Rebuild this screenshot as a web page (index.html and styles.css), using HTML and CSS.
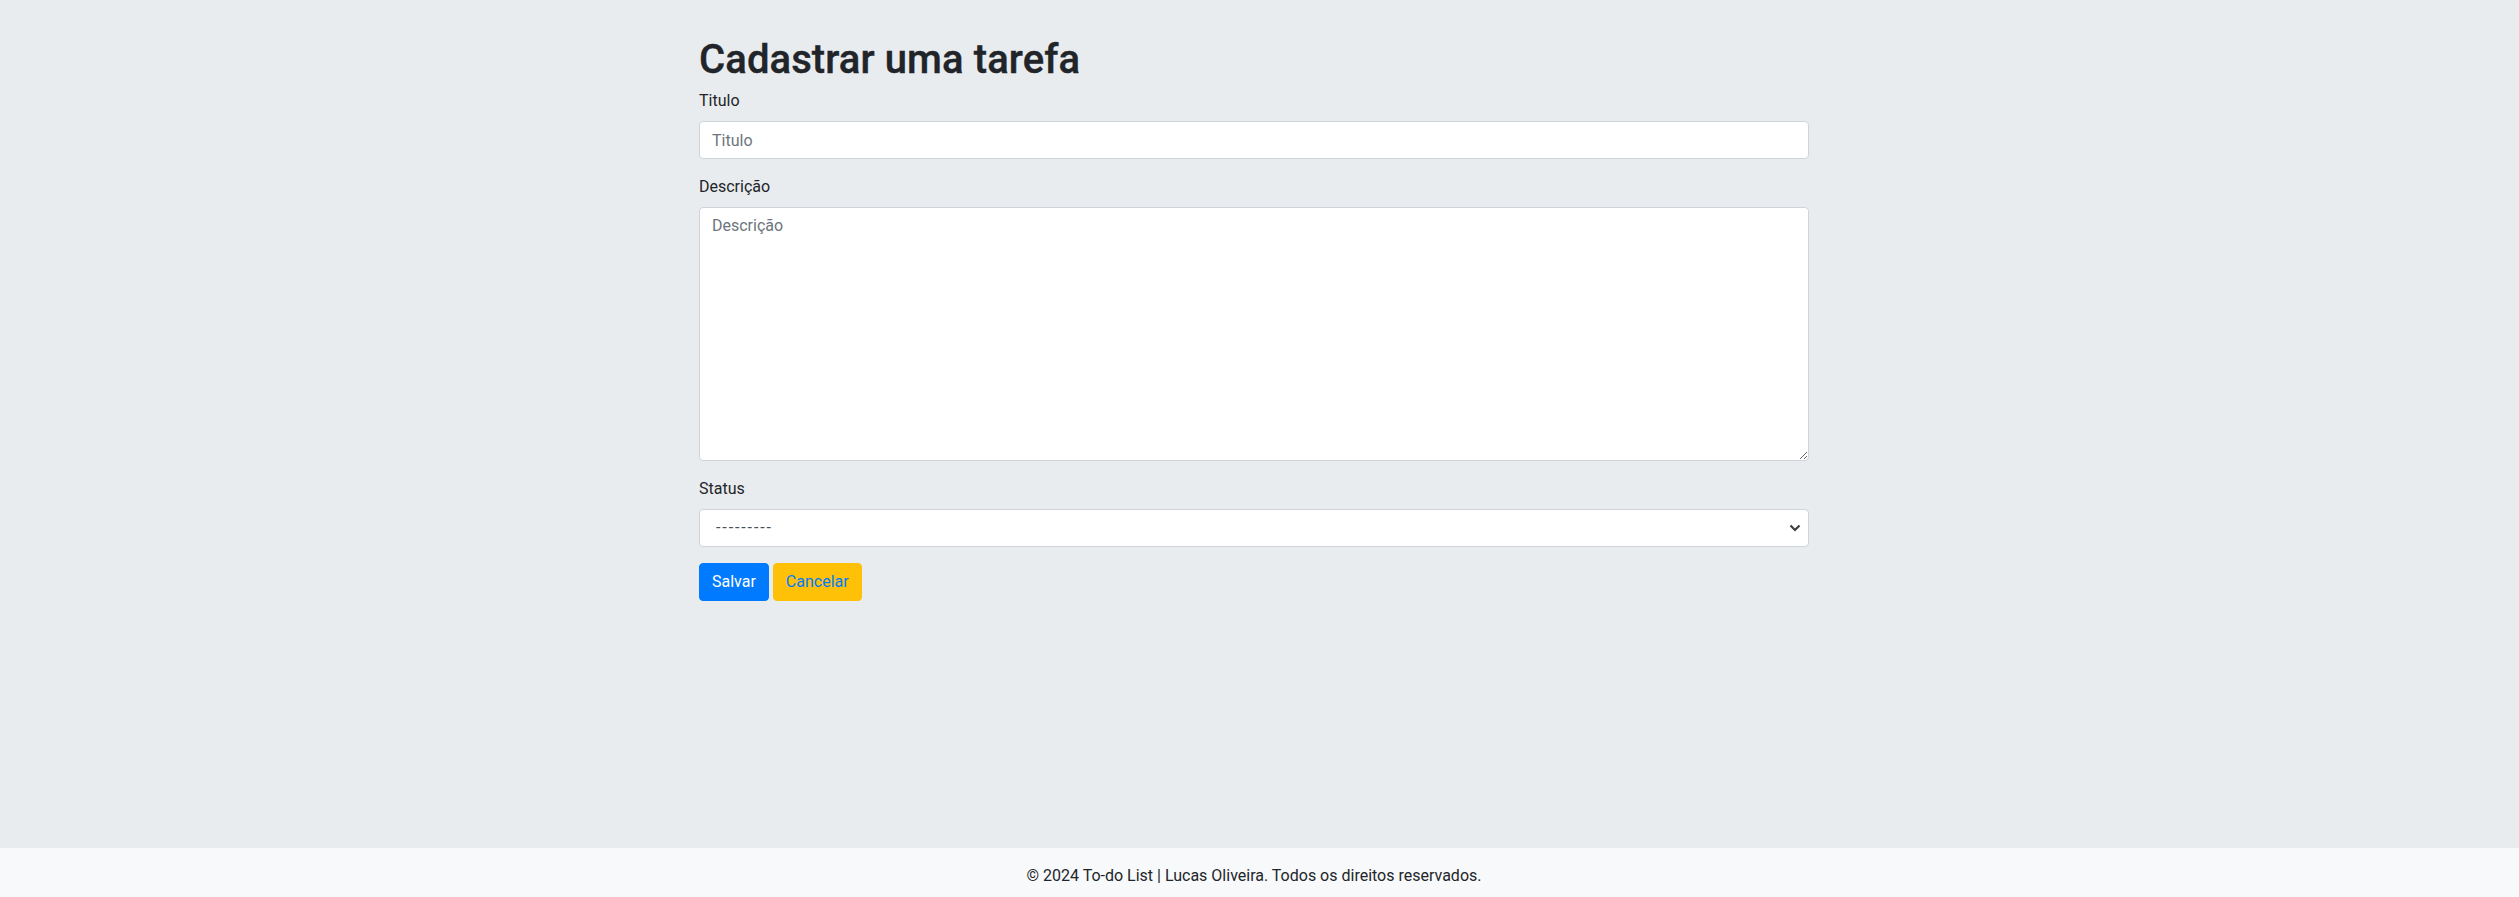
FILE: index.html
```html
<!DOCTYPE html>
<html lang="pt-br">
<head>
<meta charset="utf-8">
<title>Cadastrar uma tarefa</title>
<link rel="stylesheet" href="styles.css">
</head>
<body>
<div class="page">
  <main class="main">
    <div class="container">
      <h1 class="title">Cadastrar uma tarefa</h1>
      <form class="form">
        <div class="form-group">
          <label class="label" for="titulo">Titulo</label>
          <input class="control" id="titulo" type="text" placeholder="Titulo">
        </div>
        <div class="form-group">
          <label class="label" for="descricao">Descrição</label>
          <textarea class="control textarea" id="descricao" rows="10" placeholder="Descrição"></textarea>
        </div>
        <div class="form-group">
          <label class="label" for="status">Status</label>
          <div class="select-wrap">
            <select class="control select" id="status">
              <option>---------</option>
              <option>Pendente</option>
              <option>Concluída</option>
            </select>
            <svg class="select-arrow" width="12" height="8" viewBox="0 0 12 8"><path d="M1.5 1.5 L6 6 L10.5 1.5" fill="none" stroke="#3b3f45" stroke-width="2.2"/></svg>
          </div>
        </div>
        <div class="actions">
          <button type="button" class="btn btn-primary">Salvar</button>
          <button type="button" class="btn btn-warning">Cancelar</button>
        </div>
      </form>
    </div>
  </main>
  <footer class="footer">
    <div class="footer-text">© 2024 To-do List | Lucas Oliveira. Todos os direitos reservados.</div>
  </footer>
</div>
</body>
</html>
```
FILE: styles.css
```css
* { box-sizing: border-box; }
html, body { margin: 0; padding: 0; height: 100%; }
body {
  font-family: "Segoe UI", Roboto, "Liberation Sans", sans-serif;
  font-size: 16px;
  line-height: 1.5;
  color: #212529;
  background: #e9ecef;
  overflow: hidden;
}
.page {
  display: flex;
  flex-direction: column;
  height: 100vh;
}
.main { flex: 1; padding-right: 11px; }
.container {
  max-width: 1140px;
  margin: 0 auto;
  padding: 39px 15px 0;
}
.title {
  margin: 0 0 8px;
  font-size: 40px;
  font-weight: 500;
  line-height: 42px;
  letter-spacing: 0.1px;
  -webkit-text-stroke: 0.4px #212529;
}
.form { margin: 0; }
.form-group { margin-bottom: 16px; }
.label {
  display: inline-block;
  margin-bottom: 8px;
}
.control {
  display: block;
  width: 100%;
  height: 38px;
  padding: 6px 12px;
  font-family: inherit;
  font-size: 16px;
  line-height: 1.5;
  color: #495057;
  background: #fff;
  border: 1px solid #ced4da;
  border-radius: 4px;
  margin: 0;
}
.control::placeholder { color: #6c757d; opacity: 1; }
.textarea { height: 254px; resize: vertical; }
.select-wrap { position: relative; }
.select {
  appearance: none;
  -webkit-appearance: none;
  padding-left: 16px;
  letter-spacing: 1.9px;
}
.select-arrow {
  position: absolute;
  right: 8px;
  top: 15px;
  pointer-events: none;
}
.actions { display: flex; gap: 4px; }
.btn {
  display: inline-block;
  height: 38px;
  padding: 6px 12px;
  font-family: inherit;
  font-size: 16px;
  line-height: 1.5;
  border: 1px solid transparent;
  border-radius: 4px;
}
.btn-primary { background: #007bff; border-color: #007bff; color: #fff; }
.btn-warning { background: #ffc107; border-color: #ffc107; color: #007bff; }
.footer {
  height: 49px;
  flex: none;
  overflow: hidden;
  background: #f8f9fa;
  padding: 16px 11px 0 0;
  line-height: 24px;
}
.footer-text { text-align: center; }
```
